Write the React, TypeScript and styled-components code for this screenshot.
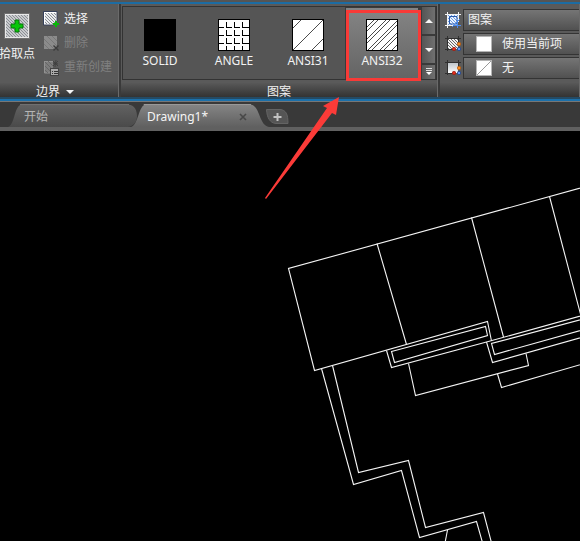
import React from "react";
import styled, { createGlobalStyle, css } from "styled-components";

const GlobalStyle = createGlobalStyle`
  * { box-sizing: border-box; }
  body {
    margin: 0;
    background: #000;
    color: #f2f2f2;
    font: 12px/16px "Noto Sans", "Noto Sans CJK SC", sans-serif;
    overflow: hidden;
  }
  button, select { font: inherit; color: inherit; border: 0; padding: 0; margin: 0; background: none; }
  svg { display: block; flex: none; }
`;

const Page = styled.div`
  position: relative;
  display: flex;
  flex-direction: column;
  height: 100vh;
`;

const Ribbon = styled.header`
  display: flex;
  gap: 2px;
  padding-top: 2px;
  background: #3a3a3a;
  border-top: 2px solid #555;
  box-shadow: inset 0 2px #1c6ca3;
`;

const Panel = styled.section<{ $grow?: boolean }>`
  display: flex;
  flex-direction: column;
  flex: ${(p) => (p.$grow ? "1 0 0" : "none")};
  min-width: 0;
  background: #5a5a5a;
  border-right: 1px solid #6a6a6a;
`;

const PanelBody = styled.div<{ $pad?: string; $gap?: number }>`
  display: flex;
  height: 79px;
  gap: ${(p) => p.$gap ?? 0}px;
  padding: ${(p) => p.$pad ?? "0"};
`;

const PanelTitle = styled.div`
  display: flex;
  align-items: center;
  justify-content: center;
  height: 14px;
  line-height: 14px;
  padding-top: 4px;
  background: linear-gradient(#585858, #333);
`;

const TitleButton = styled.button`
  display: flex;
  align-items: center;
  gap: 6px;
  height: 14px;
  line-height: 14px;
  margin-right: 8px;
`;

const RibbonEdge = styled.div`
  height: 5px;
  flex: none;
  background: linear-gradient(#244a64 0 2px, #1b70aa 2px 4px, #777 4px);
`;

const PickButton = styled.button`
  display: flex;
  flex-direction: column;
  align-items: center;
  justify-content: flex-start;
  gap: 7px;
  width: 36px;
  padding-top: 6px;
  margin-left: -1px;
  white-space: nowrap;
`;

const CommandList = styled.div`
  display: flex;
  flex-direction: column;
`;

const Command = styled.button`
  display: flex;
  align-items: center;
  gap: 4px;
  height: 24px;
  white-space: nowrap;
  &:disabled { color: #808080; }
`;

const Gallery = styled.div`
  display: flex;
  border: 1px solid #333;
  background: #555;
`;

const Swatch = styled.button<{ $active?: boolean }>`
  position: relative;
  display: flex;
  flex-direction: column;
  align-items: center;
  gap: 2px;
  width: 74px;
  padding-top: 12px;
  ${(p) =>
    p.$active &&
    css`
      background: linear-gradient(#858585, #646464);
      box-shadow: inset 0 0 0 1px #3a3a3a;
    `}
`;

const Highlight = styled.span`
  position: absolute;
  inset: 3px -2px -2px 1px;
  border: 3px solid #f93a37;
  z-index: 1;
`;

const Scroller = styled.div`
  display: flex;
  flex-direction: column;
  gap: 2px;
  width: 17px;
  padding: 0 1px 0 3px;
  background: #3a3a3a;
`;

const ScrollButton = styled.button<{ $h: number }>`
  display: flex;
  align-items: center;
  justify-content: center;
  height: ${(p) => p.$h}px;
  background: linear-gradient(90deg, #555, #707070);
`;

const Properties = styled.div`
  display: grid;
  flex: 1;
  grid-template-columns: 16px 1fr;
  grid-auto-rows: 23px;
  align-items: center;
  gap: 1px 2px;
`;

const Combo = styled.label`
  display: flex;
  align-items: center;
  gap: 10px;
  height: 22px;
  padding-left: 4px;
  border: 1px solid #343434;
  border-right: 0;
  background: linear-gradient(#757575, #515151);
`;

const ColorCombo = styled(Combo)`
  padding-left: 12px;
`;

const Select = styled.select`
  flex: 1;
  min-width: 0;
  appearance: none;
  outline: 0;
`;

const TabBar = styled.nav`
  display: flex;
  flex: none;
  align-items: flex-end;
  height: 29px;
  padding-left: 8px;
  background: #393939;
  border-bottom: 4px solid #606060;
`;

const Tab = styled.div<{ $active?: boolean }>`
  position: relative;
  display: flex;
  align-items: center;
  justify-content: space-between;
  width: ${(p) => (p.$active ? 138 : 130)}px;
  height: 23px;
  padding: 2px 22px 0 16px;
  margin-left: ${(p) => (p.$active ? -7 : 0)}px;
  color: ${(p) => (p.$active ? "#f5f5f5" : "#b5b5b5")};
`;

const TabShape = styled.svg`
  position: absolute;
  inset: 0;
  width: 100%;
  height: 100%;
`;

const TabButton = styled.button`
  position: relative;
`;

const AddTab = styled.button`
  margin-left: -3px;
`;

const Canvas = styled.main`
  flex: 1;
  min-height: 0;
  background: #000;
`;

const Drawing = styled.svg`
  width: 100%;
  height: 100%;
`;

const Pointer = styled.svg`
  position: absolute;
  left: 264px;
  top: 96px;
  pointer-events: none;
`;

const Defs = () => (
  <svg width="0" height="0" aria-hidden="true">
    <defs>
      <pattern id="hatch" width="3" height="3" patternUnits="userSpaceOnUse">
        <path d="M0 0l3 3" stroke="#8b8f94" strokeWidth="1" />
      </pattern>
      <pattern id="hatchDark" width="3" height="3" patternUnits="userSpaceOnUse">
        <path d="M0 0l3 3" stroke="#444" strokeWidth=".8" />
      </pattern>
      <pattern id="hatchBlue" width="3" height="3" patternUnits="userSpaceOnUse">
        <path d="M0 0l3 3" stroke="#6f9fe2" strokeWidth="1" />
      </pattern>
      <linearGradient id="tabOn" x2="0" y2="1">
        <stop stopColor="#858585" />
        <stop offset="1" stopColor="#606060" />
      </linearGradient>
      <linearGradient id="tabOff" x2="0" y2="1">
        <stop stopColor="#626262" />
        <stop offset="1" stopColor="#4a4a4a" />
      </linearGradient>
      <linearGradient id="fade" x2="0" y2="1">
        <stop stopColor="#bfc5ca" />
        <stop offset="1" stopColor="#fff" />
      </linearGradient>
    </defs>
  </svg>
);

const Down = ({ flip = false }: { flip?: boolean }) => (
  <svg width="8" height="4" viewBox="0 0 8 4" aria-hidden="true">
    <path d={flip ? "M0 4h8L4 0z" : "M0 0h8L4 4z"} fill="#f5f5f5" />
  </svg>
);

const PickIcon = () => (
  <svg width="26" height="26" viewBox="0 0 26 26" aria-hidden="true">
    <rect x=".5" y=".5" width="25" height="25" fill="#c9cbce" stroke="#707070" />
    <rect x="1.5" y="1.5" width="23" height="23" fill="url(#hatch)" stroke="#e9e9e9" />
    <path d="M11 7h4v4h4v4h-4v4h-4v-4H7v-4h4z" fill="#08c608" stroke="#08700c" />
  </svg>
);

const SelectIcon = () => (
  <svg width="17" height="17" viewBox="0 0 17 17" aria-hidden="true">
    <rect x="1.5" y="1.5" width="12" height="12" fill="#e9ebed" stroke="#fff" />
    <rect x="2" y="2" width="11" height="11" fill="url(#hatch)" />
    <path d="M.5 14V.5H14V10M.5 14H10" fill="none" stroke="#36415a" />
    <path d="M12 10h2v2h2v2h-2v2h-2v-2h-2v-2h2z" fill="#08b808" />
  </svg>
);

const RemoveIcon = () => (
  <svg width="17" height="17" viewBox="0 0 17 17" aria-hidden="true">
    <rect x="1" y="1" width="13" height="13" fill="#8b8b8b" />
    <path d="M1 4l10 10M1 9l5 5M4 1l10 10M9 1l5 5" stroke="#777" />
    <path d="M10.500 10.500l5 5m0-5l-5 5" stroke="#3c3c3c" strokeWidth="1.400" />
  </svg>
);

const RecreateIcon = () => (
  <svg width="17" height="17" viewBox="0 0 17 17" aria-hidden="true">
    <rect x="1" y="2" width="9" height="12" fill="#7d7d7d" />
    <path d="M1.500 2v12H8M1.500 2.500H10" fill="none" stroke="#929292" />
    <path d="M2 3l6 6M2 7l5 5M2 11l3 3M5 2l5 5" stroke="#666" />
    <path d="M10 4l5 1M13 1l-1 7M10 7l5-5M10 2l5 5" stroke="#3c3c3c" strokeWidth=".8" />
    <rect x="7.500" y="9.500" width="8" height="7" fill="#aaa" stroke="#444" />
    <path d="M9 12.500h1m1 0h4M9 14.500h1m1 0h4" stroke="#333" />
  </svg>
);

const patternPaths: Record<string, string> = {
  SOLID: "",
  ANGLE:
    "M8.500 3v5.500h5M16.500 3v5.500h5M24.500 3v5.500h6M0 8.500h6M8.500 11v5.500h5M16.500 11v5.500h5M24.500 11v5.500h6M0 16.500h6M8.500 19v5.500h5M16.500 19v5.500h5M24.500 19v5.500h6M0 24.500h6M8.500 27v4M16.500 27v4M24.500 27v4",
  ANSI31: "M1 9L9 1M1 31L31 1M20 31L31 20",
  ANSI32: "M1 8L8 1M1 12L12 1M1 20L20 1M1 24L24 1M2 31L31 2M6 31L31 6M14 31L31 14M18 31L31 18M26 31L31 26",
};

const PatternIcon = ({ name }: { name: string }) => (
  <svg width="32" height="32" viewBox="0 0 32 32" shapeRendering="crispEdges" aria-hidden="true">
    <rect x=".5" y=".5" width="31" height="31" fill={name === "SOLID" ? "#000" : "#fff"} stroke="#000" />
    <path d={patternPaths[name]} fill="none" stroke="#000" strokeWidth={name === "ANGLE" ? 1 : 0.7} />
  </svg>
);

const TypeIcon = () => (
  <svg width="16" height="16" viewBox="0 0 16 16" aria-hidden="true">
    <rect x="3" y="3" width="10" height="10" fill="#eef4ff" />
    <rect x="3" y="3" width="10" height="10" fill="url(#hatchBlue)" />
    <path d="M2.500 0v16M13.500 0v10M0 2.500h16M0 13.500h9" stroke="#f4f4f4" />
    <path d="M4.500 12V4.500H12V12z" fill="none" stroke="#2859ac" />
    <path d="M7 15l8-8M8 13.500h8M12.500 8v8" stroke="#4c8cf0" />
  </svg>
);

const ColorIcon = ({ fill }: { fill: string }) => (
  <svg width="16" height="16" viewBox="0 0 16 16" aria-hidden="true">
    <rect x="3" y="3" width="10" height="10" fill="#f2f2f2" />
    <rect x="3" y="3" width="10" height="10" fill={fill} />
    <path d="M2.500 0v15M13.500 0v6M0 2.500h16M0 13.500h7" stroke="#303030" />
    <rect x="12.500" y="6.500" width="3" height="3" rx="1" fill="#f98b20" stroke="#b85c10" />
    <rect x="7.500" y="11.500" width="3" height="3" rx="1" fill="#e12c1c" stroke="#a01d10" />
    <rect x="12.500" y="11.500" width="3" height="3" rx="1" fill="#5f9bf2" stroke="#20438c" />
  </svg>
);

const ColorSwatch = ({ none = false }: { none?: boolean }) => (
  <svg width="16" height="16" viewBox="0 0 16 16" aria-hidden="true">
    <rect x=".5" y=".5" width="15" height="15" fill="#fff" stroke="#b5b5b5" />
    {none && <path d="M1 15L15 1" stroke="#999" />}
  </svg>
);

const TabBackground = ({ active = false }: { active?: boolean }) => (
  <TabShape viewBox="0 0 130 23" preserveAspectRatio="none" aria-hidden="true">
    {active ? (
      <path d="M0 23C7 21 7 1 14 .5H112C122 1 120 21 130 23z" fill="url(#tabOn)" />
    ) : (
      <path d="M0 23C7 21 6 1 14 .5H120C127 1 129 7 129 12S126 22 120 23z" fill="url(#tabOff)" />
    )}
    <path d={active ? "M12 .5H113" : "M12 .5H121"} stroke={active ? "#999" : "#707070"} />
  </TabShape>
);

const planLines = [
  "M700 155L288.500 268.500L314.500 370.500L487.500 321.500L491.500 341",
  "M377 243.500L406.500 344.500M471.500 217.500L503.500 337M549.500 196.500L581 316",
  "M386.500 350.500L391.500 367.500L486.500 342L700 283",
  "M391.500 351.500L485.500 326.500L487.500 335.500L394.500 362.500Z",
  "M486.500 342L492.500 362.500L700 304M700 288L491.500 343.500L494.500 354.500L700 297",
  "M408.500 363.500L415.500 395.500L528.500 365.500L526 353.500",
  "M497.500 374L501.500 387.500L700 330",
  "M321.500 368.500L353.500 484.500L401.500 470.500L419.500 537.500L476.500 521.500L496 590",
  "M332.500 365.500L358.500 472.500L408.500 460.500L425.500 527.500L483.500 512.500L504 590",
  "M447.500 530L436 590",
];

export default function App() {
  return (
    <>
      <GlobalStyle />
      <Page>
        <Ribbon>
          <Panel>
            <PanelBody $pad="3px 6px 0 0" $gap={8}>
              <PickButton>
                <PickIcon />
                拾取点
              </PickButton>
              <CommandList>
                <Command><SelectIcon />选择</Command>
                <Command disabled><RemoveIcon />删除</Command>
                <Command disabled><RecreateIcon />重新创建</Command>
              </CommandList>
            </PanelBody>
            <PanelTitle>
              <TitleButton>边界<Down /></TitleButton>
            </PanelTitle>
          </Panel>
          <Panel>
            <PanelBody $pad="2px 0 3px 1px">
              <Gallery>
                {["SOLID", "ANGLE", "ANSI31", "ANSI32"].map((name) => (
                  <Swatch key={name} $active={name === "ANSI32"} aria-pressed={name === "ANSI32"}>
                    <PatternIcon name={name} />
                    {name}
                    {name === "ANSI32" && <Highlight />}
                  </Swatch>
                ))}
                <Scroller>
                  <ScrollButton $h={27} aria-label="上移"><Down flip /></ScrollButton>
                  <ScrollButton $h={27} aria-label="下移"><Down /></ScrollButton>
                  <ScrollButton $h={14} aria-label="展开">
                    <svg width="8" height="8" viewBox="0 0 8 8" aria-hidden="true">
                      <path d="M1 .5h6M1 2.500h6" stroke="#ddd" />
                      <path d="M1 4h6L4 7z" fill="#fff" />
                    </svg>
                  </ScrollButton>
                </Scroller>
              </Gallery>
            </PanelBody>
            <PanelTitle>图案</PanelTitle>
          </Panel>
          <Panel $grow>
            <PanelBody $pad="4px 0 0 5px">
              <Properties>
                <TypeIcon />
                <Combo>
                  <Select aria-label="图案填充类型"><option>图案</option></Select>
                </Combo>
                <ColorIcon fill="url(#hatchDark)" />
                <ColorCombo>
                  <ColorSwatch />
                  <Select aria-label="图案填充颜色"><option>使用当前项</option></Select>
                </ColorCombo>
                <ColorIcon fill="url(#fade)" />
                <ColorCombo>
                  <ColorSwatch none />
                  <Select aria-label="背景色"><option>无</option></Select>
                </ColorCombo>
              </Properties>
            </PanelBody>
            <PanelTitle />
          </Panel>
        </Ribbon>
        <RibbonEdge />
        <TabBar>
          <Tab>
            <TabBackground />
            <TabButton>开始</TabButton>
          </Tab>
          <Tab $active>
            <TabBackground active />
            <TabButton>Drawing1*</TabButton>
            <TabButton aria-label="关闭">
              <svg width="8" height="8" viewBox="0 0 8 8" aria-hidden="true">
                <path d="M1 1l6 6M7 1L1 7" stroke="#484848" strokeWidth="1.600" />
              </svg>
            </TabButton>
          </Tab>
          <AddTab aria-label="新图形">
            <svg width="23" height="19" viewBox="0 0 23 19" aria-hidden="true">
              <path d="M.5 1.500H14C20 2 22 6 22 15.500H10C4 15 1 10 .5 1.500z" fill="#555" stroke="#646464" />
              <path d="M11.500 5v8M7.500 9h8" stroke="#c2c2c2" strokeWidth="2" />
            </svg>
          </AddTab>
        </TabBar>
        <Canvas>
          <Drawing role="img" aria-label="Drawing1">
            <g transform="translate(0 -131)" fill="none" stroke="#f4f4f4" strokeWidth="1.100">
              {planLines.map((d) => (
                <path key={d} d={d} />
              ))}
            </g>
          </Drawing>
        </Canvas>
        <Pointer width="76" height="104" viewBox="264 96 76 104" aria-hidden="true">
          <path d="M339 97L323 106L327 108L265 198L266 199L332 113L336 115Z" fill="#fb3b38" />
        </Pointer>
        <Defs />
      </Page>
    </>
  );
}
